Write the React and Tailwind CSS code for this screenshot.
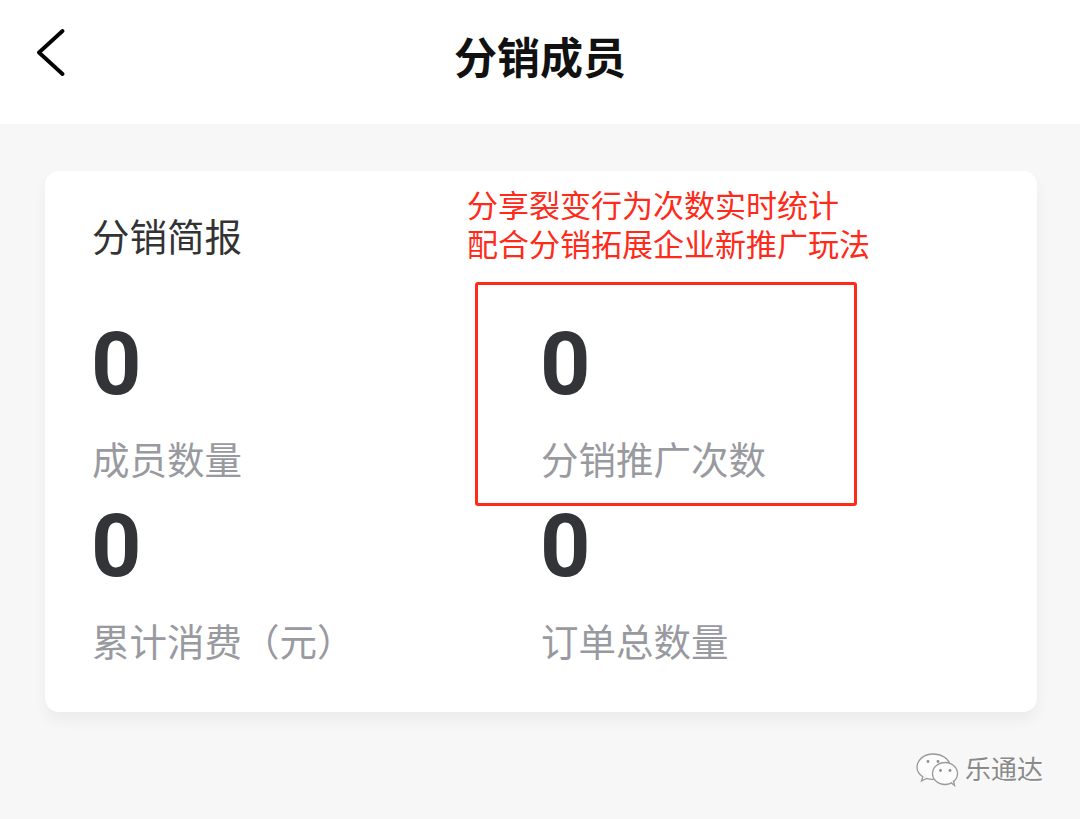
import React from "react";

const FONT = "font-['Roboto','Noto_Sans_CJK_SC',sans-serif]";

const stats = [
  { value: "0", label: "成员数量" },
  { value: "0", label: "分销推广次数" },
  { value: "0", label: "累计消费（元）" },
  { value: "0", label: "订单总数量" },
];

const WeChatMark = () => (
  <svg width="44" height="38" viewBox="0 0 44 38" fill="none" stroke="#9a9a9a" strokeWidth="1.3">
    <path d="M18 3C9 3 2 9 2 16c0 4 2.300 7.500 5.800 9.800L6.500 30l5-2.600c2 .6 4 .9 6.500.9 1 0 2-.1 3-.3C19 20 25 13 35 13.500 33.500 7.500 26.500 3 18 3Z" fill="#fcfcfc" />
    <ellipse cx="30" cy="22.500" rx="12.500" ry="11" fill="#fcfcfc" />
    <path d="M36 31.500l3.500 3-1-5" fill="#fcfcfc" />
    <circle cx="13" cy="10.500" r="1.400" fill="#8f8f8f" stroke="none" />
    <circle cx="23" cy="10.500" r="1.400" fill="#8f8f8f" stroke="none" />
    <circle cx="25.500" cy="19.500" r="1.400" fill="#8f8f8f" stroke="none" />
    <circle cx="35" cy="19.500" r="1.400" fill="#8f8f8f" stroke="none" />
  </svg>
);

export default function App() {
  return (
    <div className={`${FONT} relative h-[819px] w-[1080px] overflow-hidden bg-[#f7f7f7]`}>
      <header className="relative flex h-[124px] items-center justify-center bg-white pb-[6px]">
        <svg
          className="absolute left-[37px] top-[29px]"
          width="28"
          height="47"
          viewBox="0 0 28 47"
          fill="none"
          stroke="#000"
          strokeWidth="3.800"
          strokeLinecap="round"
          strokeLinejoin="round"
        >
          <path d="M25.500 2 2 23.500 25.500 45" />
        </svg>
        <h1 className="text-[43px] leading-none font-bold text-[#111]">分销成员</h1>
      </header>

      <main className="pl-[45px] pr-[43px] pt-[47px]">
        <section className="h-[541px] rounded-[14px] bg-white pl-[47px] pt-[45px] shadow-[0_8px_14px_rgba(0,0,0,0.05)]">
          <h2 className="text-[37.500px] leading-[44px] text-[#333]">分销简报</h2>
          <div className="mt-[54px] grid grid-cols-[449px_1fr]">
            {stats.map((s, i) => (
              <div key={i} className="h-[182px]">
                <div className="-ml-[1px] text-[88px] leading-[100px] font-bold text-[#333438]">{s.value}</div>
                <div className="mt-[25px] text-[37.500px] leading-[44px] text-[#999a9f]">{s.label}</div>
              </div>
            ))}
          </div>
        </section>
      </main>

      {/* annotation drawn over the screenshot */}
      <div className="absolute left-[467px] top-[187px] text-[31px] leading-[39px] whitespace-nowrap text-[#ff2a1a]">
        <div>分享裂变行为次数实时统计</div>
        <div>配合分销拓展企业新推广玩法</div>
      </div>
      <div className="absolute left-[475px] top-[282px] h-[224px] w-[382px] rounded-[3px] border-[3px] border-[#ff2a1a]" />

      {/* watermark */}
      <div className="absolute left-[915px] top-[751px] flex items-center gap-[6px]">
        <WeChatMark />
        <span className="text-[26px] leading-none text-[#8a8a8a] [text-shadow:1px_1px_0_#fff]">乐通达</span>
      </div>
    </div>
  );
}
